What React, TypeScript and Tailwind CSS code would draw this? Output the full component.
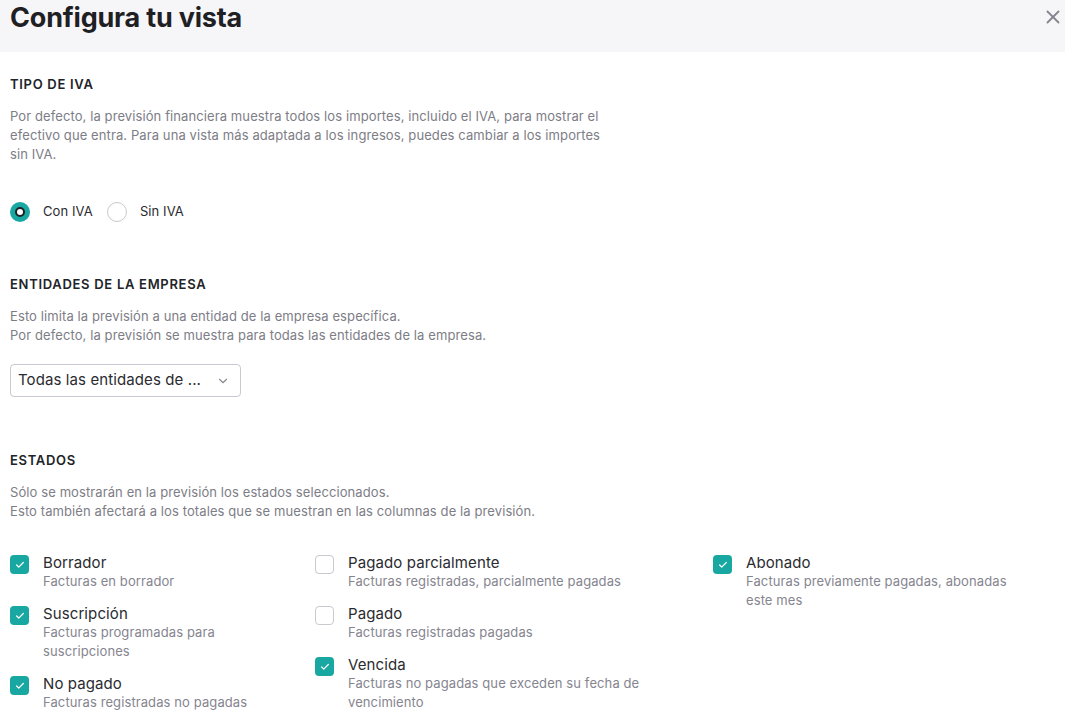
import { X, ChevronDown, Check } from 'lucide-react';
import { useState } from 'react';

const font = { fontFamily: 'Inter, "Noto Sans", sans-serif' };

type Estado = { label: string; sub: string; checked: boolean };

const columns: { width: string; text: string; items: Estado[] }[] = [
  {
    width: 'w-[305px]',
    text: 'w-[240px]',
    items: [
      { label: 'Borrador', sub: 'Facturas en borrador', checked: true },
      { label: 'Suscripción', sub: 'Facturas programadas para suscripciones', checked: true },
      { label: 'No pagado', sub: 'Facturas registradas no pagadas', checked: true },
    ],
  },
  {
    width: 'w-[398px]',
    text: 'w-[320px]',
    items: [
      { label: 'Pagado parcialmente', sub: 'Facturas registradas, parcialmente pagadas', checked: false },
      { label: 'Pagado', sub: 'Facturas registradas pagadas', checked: false },
      { label: 'Vencida', sub: 'Facturas no pagadas que exceden su fecha de vencimiento', checked: true },
    ],
  },
  {
    width: 'flex-1',
    text: 'w-[280px]',
    items: [
      { label: 'Abonado', sub: 'Facturas previamente pagadas, abonadas este mes', checked: true },
    ],
  },
];

export default function App() {
  const [iva, setIva] = useState<'con' | 'sin'>('con');

  return (
    <div className="min-h-[717px] w-full bg-white text-[#1f2024]" style={font}>
      <header className="flex h-[52px] items-start justify-between bg-[#f6f6f8] pl-[10px] pr-[1px]">
        <h1 className="mt-[1px] text-[27px] font-bold leading-[34px] tracking-[-0.2px] text-[#1f2024]">
          Configura tu vista
        </h1>
        <button className="mt-[6px] text-[#85858f]">
          <X size={22} strokeWidth={2} />
        </button>
      </header>

      <div className="px-[10px]">
        <section className="pt-[24px]">
          <h2 className="text-[13px] font-semibold leading-[16px] tracking-[0.7px] text-[#222328]">TIPO DE IVA</h2>
          <p className="mt-[15px] w-[600px] text-[13px] leading-[19px] tracking-[0.1px] text-[#7d7d86]">
            Por defecto, la previsión financiera muestra todos los importes, incluido el IVA, para mostrar el
            efectivo que entra. Para una vista más adaptada a los ingresos, puedes cambiar a los importes sin IVA.
          </p>
          <div className="mt-[38px] flex items-center gap-[14px]">
            <Radio label="Con IVA" checked={iva === 'con'} onClick={() => setIva('con')} />
            <Radio label="Sin IVA" checked={iva === 'sin'} onClick={() => setIva('sin')} />
          </div>
        </section>

        <section className="pt-[54px]">
          <h2 className="text-[13px] font-semibold leading-[16px] tracking-[0.7px] text-[#222328]">
            ENTIDADES DE LA EMPRESA
          </h2>
          <p className="mt-[15px] text-[13px] leading-[19px] tracking-[0.1px] text-[#7d7d86]">
            Esto limita la previsión a una entidad de la empresa específica.
            <br />
            Por defecto, la previsión se muestra para todas las entidades de la empresa.
          </p>
          <button className="mt-[19px] flex h-[33px] w-[231px] items-center justify-between rounded-[4px] border border-[#c9c9cf] pl-[7px] pr-[10px] text-[15px] tracking-[0.1px] text-[#2a2b30]">
            <span>Todas las entidades de ...</span>
            <ChevronDown size={14} className="text-[#8a8a93]" />
          </button>
        </section>

        <section className="pt-[55px]">
          <h2 className="text-[13px] font-semibold leading-[16px] tracking-[0.7px] text-[#222328]">ESTADOS</h2>
          <p className="mt-[15px] text-[13px] leading-[19px] tracking-[0.1px] text-[#7d7d86]">
            Sólo se mostrarán en la previsión los estados seleccionados.
            <br />
            Esto también afectará a los totales que se muestran en las columnas de la previsión.
          </p>
          <div className="mt-[32px] flex">
            {columns.map((col, i) => (
              <div key={i} className={`flex flex-col gap-[13px] ${col.width}`}>
                {col.items.map((item) => (
                  <CheckItem key={item.label} item={item} textWidth={col.text} />
                ))}
              </div>
            ))}
          </div>
        </section>
      </div>
    </div>
  );
}

function Radio({ label, checked, onClick }: { label: string; checked: boolean; onClick: () => void }) {
  return (
    <button onClick={onClick} className="flex items-center gap-[13px] text-[13px] tracking-[0.1px] text-[#2a2b30]">
      <span
        className={`grid size-[20px] place-items-center rounded-full ${
          checked ? 'bg-[#19a7a2]' : 'border border-[#c9c9cf] bg-white'
        }`}
      >
        {checked && <span className="size-[10px] rounded-full border-[2px] border-[#1f2024] bg-white" />}
      </span>
      {label}
    </button>
  );
}

function CheckItem({ item, textWidth }: { item: Estado; textWidth: string }) {
  return (
    <div className="flex items-start gap-[14px]">
      <span
        className={`mt-[2px] grid size-[19px] shrink-0 place-items-center rounded-[4px] ${
          item.checked ? 'bg-[#19a7a2]' : 'border border-[#c9c9cf] bg-white'
        }`}
      >
        {item.checked && <Check size={10} strokeWidth={3} className="text-white" />}
      </span>
      <div className={textWidth}>
        <div className="text-[15px] leading-[19px] tracking-[0.1px] text-[#2a2b30]">{item.label}</div>
        <div className="text-[13px] leading-[19px] tracking-[0.1px] text-[#85858f]">{item.sub}</div>
      </div>
    </div>
  );
}
